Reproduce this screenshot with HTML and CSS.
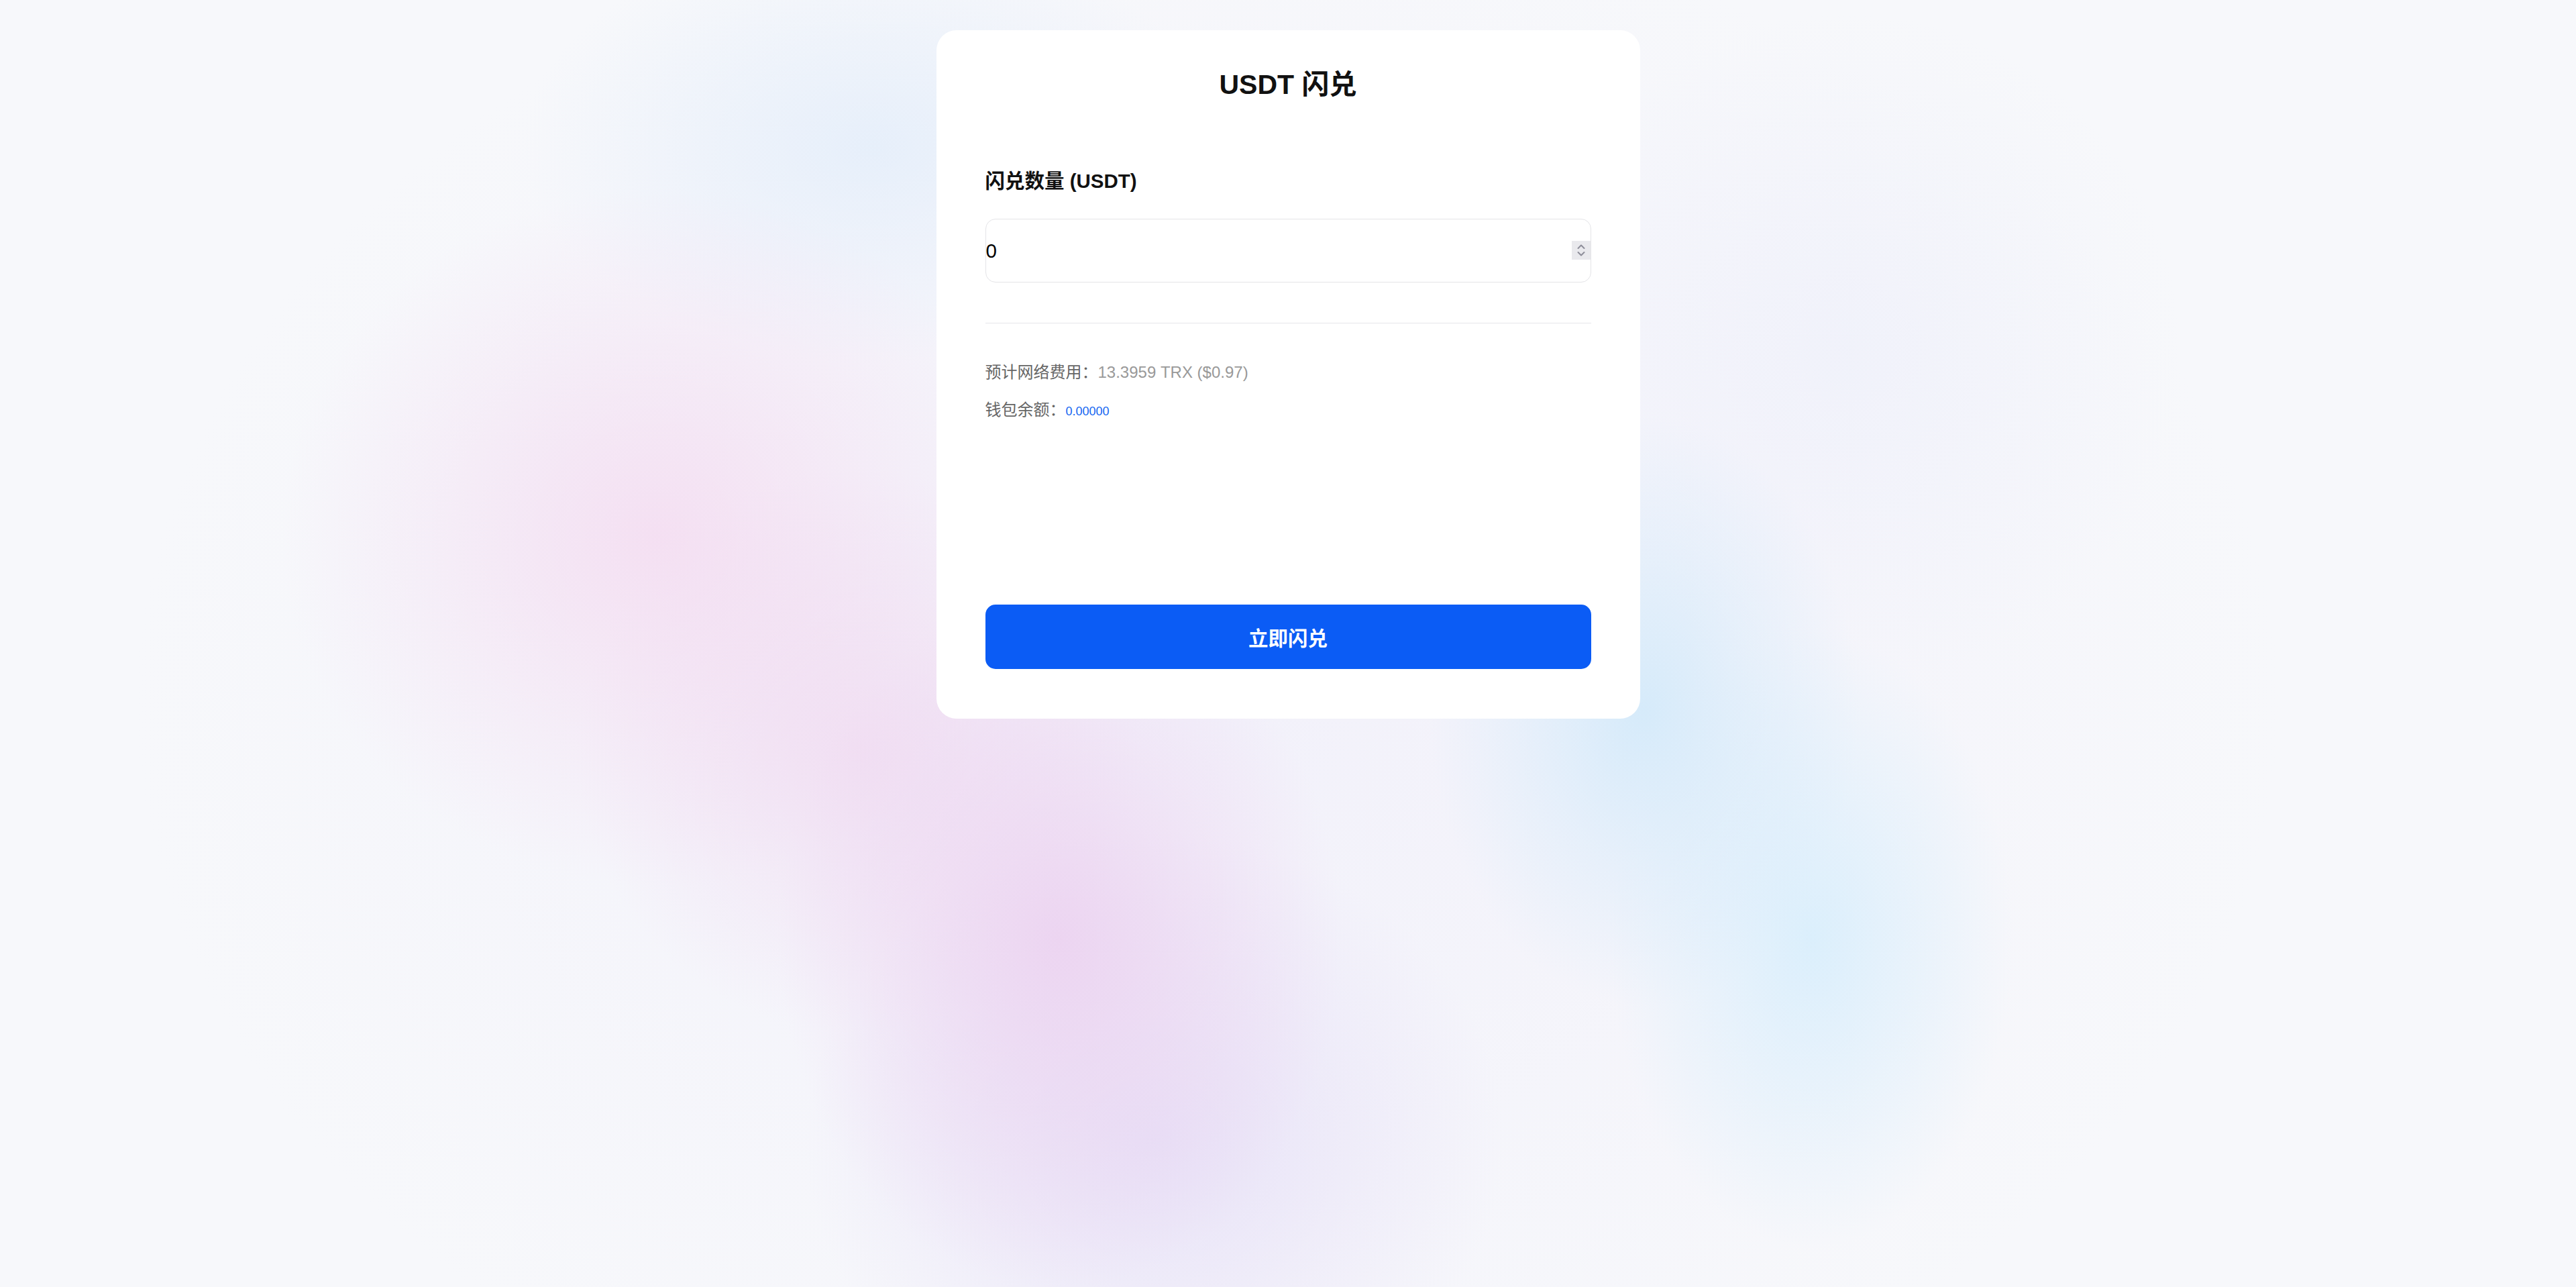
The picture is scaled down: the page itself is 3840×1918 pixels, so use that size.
FILE: index.html
```html
<!DOCTYPE html>
<html lang="zh-CN">
<head>
    <meta charset="UTF-8">
    <meta name="viewport" content="width=device-width, initial-scale=1.0">
    <title>USDT 闪兑</title>
    <link rel="stylesheet" href="styles.css">
</head>
<body>
    <div class="card">
        <h2 class="title">USDT 闪兑</h2>

        <label class="field-label" for="amount">闪兑数量 (USDT)</label>
        <div class="input-wrap">
            <input class="amount-input" type="number" id="amount" value="0" min="0">
            <span class="spinner">
                <svg width="16" height="22" viewBox="0 0 16 22" fill="none" stroke="#8d8d99" stroke-width="2" stroke-linecap="round" stroke-linejoin="round">
                    <polyline points="3.5,8 8,3.5 12.5,8"/>
                    <polyline points="3.5,14 8,18.5 12.5,14"/>
                </svg>
            </span>
        </div>

        <div class="divider"></div>

        <p class="info-row">预计网络费用：<span class="fee">13.3959 TRX ($0.97)</span></p>
        <p class="info-row balance-row">钱包余额：<span class="balance">0.00000</span></p>

        <button class="swap-btn" type="button">立即闪兑</button>
    </div>
</body>
</html>
```

FILE: styles.css
```css
html, body {
    margin: 0;
    padding: 0;
}
body {
    min-height: 1918px;
    font-family: "Liberation Sans", Arial, "Noto Sans CJK SC", sans-serif;
    background-color: #f7f8fb;
    background-image:
        radial-gradient(ellipse 420px 520px at 1580px 1400px, rgba(236, 210, 240, 0.9), rgba(236, 210, 240, 0.4) 55%, rgba(236, 210, 240, 0) 100%),
        radial-gradient(ellipse 420px 420px at 1280px 1120px, rgba(240, 216, 240, 0.7), rgba(240, 216, 240, 0) 100%),
        radial-gradient(ellipse 520px 460px at 1720px 1700px, rgba(228, 220, 246, 0.8), rgba(228, 220, 246, 0) 100%),
        radial-gradient(ellipse 560px 520px at 980px 800px, rgba(244, 218, 240, 0.8), rgba(244, 218, 240, 0.3) 60%, rgba(244, 218, 240, 0) 100%),
        radial-gradient(ellipse 320px 440px at 2450px 1060px, rgba(212, 234, 250, 0.95), rgba(212, 234, 250, 0.4) 55%, rgba(212, 234, 250, 0) 100%),
        radial-gradient(ellipse 300px 460px at 2700px 1400px, rgba(216, 238, 252, 0.9), rgba(216, 238, 252, 0) 100%),
        radial-gradient(ellipse 520px 320px at 1300px 220px, rgba(224, 236, 250, 0.7), rgba(224, 236, 250, 0) 100%),
        radial-gradient(ellipse 500px 500px at 2750px 520px, rgba(236, 238, 250, 0.55), rgba(236, 238, 250, 0) 100%),
        radial-gradient(ellipse 1600px 1200px at 1800px 1050px, rgba(240, 238, 250, 0.7), rgba(240, 238, 250, 0) 100%);
}
.card {
    width: 1049px;
    box-sizing: border-box;
    margin: 45px auto 0;
    padding: 57px 73px 74px;
    background-color: #ffffff;
    border-radius: 30px;
}
.title {
    margin: 0 0 102px;
    font-size: 41px;
    line-height: 48px;
    font-weight: bold;
    color: #111111;
    text-align: center;
}
.field-label {
    display: block;
    font-size: 29.5px;
    line-height: 36px;
    font-weight: bold;
    color: #111111;
}
.input-wrap {
    position: relative;
    margin-top: 38px;
}
.amount-input {
    display: block;
    width: 100%;
    height: 95px;
    box-sizing: border-box;
    padding: 33px 0;
    border: 1px solid #e4e4e7;
    border-radius: 15px;
    font-family: "Liberation Sans", Arial, sans-serif;
    font-size: 29.5px;
    color: #000000;
    background: #ffffff;
    outline: none;
    -moz-appearance: textfield;
}
.amount-input::-webkit-inner-spin-button,
.amount-input::-webkit-outer-spin-button {
    -webkit-appearance: none;
    margin: 0;
}
.spinner {
    position: absolute;
    top: 33px;
    right: 1px;
    width: 28px;
    height: 28px;
    display: flex;
    align-items: center;
    justify-content: center;
    background-color: #e9e9ed;
}
.divider {
    height: 1px;
    margin-top: 60px;
    background-color: #e6e6e9;
}
.info-row {
    margin: 57px 0 0;
    font-size: 24px;
    line-height: 32px;
    color: #666666;
}
.balance-row {
    margin-top: 24px;
}
.fee {
    color: #999999;
}
.balance {
    font-size: 18px;
    color: #1266f1;
}
.swap-btn {
    display: block;
    width: 100%;
    height: 96px;
    margin-top: 272px;
    border: none;
    border-radius: 15px;
    background-color: #0b5cf5;
    color: #ffffff;
    font-family: "Liberation Sans", Arial, "Noto Sans CJK SC", sans-serif;
    font-size: 29.5px;
    font-weight: bold;
    cursor: pointer;
}
```
